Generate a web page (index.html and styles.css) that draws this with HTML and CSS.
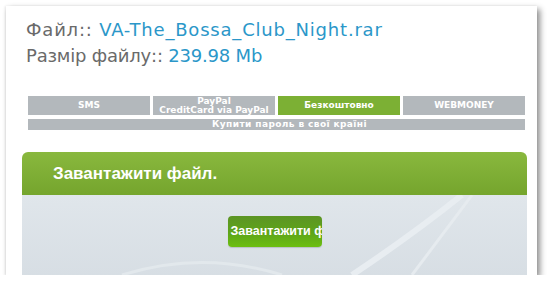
FILE: index.html
```html
<!DOCTYPE html>
<html>
<head>
<meta charset="utf-8">
<link rel="stylesheet" href="styles.css">
</head>
<body>
<div class="frame">
  <div class="info">
    <div class="line one">Файл:: <span class="val">VA-The_Bossa_Club_Night.rar</span></div>
    <div class="line two">Размір файлу:: <span class="val">239.98 Mb</span></div>
  </div>
  <div class="tabs">
    <div class="tab">SMS</div>
    <div class="tab">PayPal<br>CreditCard via PayPal</div>
    <div class="tab active">Безкоштовно</div>
    <div class="tab">WEBMONEY</div>
    <div class="tab wide">Купити пароль в свої країні</div>
  </div>
  <div class="panel">
    <div class="panel-head">Завантажити файл.</div>
    <div class="panel-body">
      <svg class="arcs" width="505" height="80" viewBox="0 0 505 80">
        <path d="M330 80 Q390 40 440 0" stroke="#e8edf1" stroke-width="6" fill="none"/>
        <path d="M390 80 Q420 40 450 0" stroke="#e6ebef" stroke-width="3" fill="none"/>
        <path d="M100 80 Q180 55 260 80" stroke="#e2e8ec" stroke-width="3" fill="none"/>
      </svg>
      <div class="btn">Завантажити файл</div>
    </div>
  </div>
</div>
</body>
</html>
```
FILE: styles.css
```css
html, body { margin: 0; padding: 0; background: #fff; }
.frame {
  margin: 6px 0 0 6px;
  width: 531px;
  height: 269px;
  background: #fff;
  box-shadow: 3px 3px 6px rgba(0,0,0,0.45), -1px 0 2px rgba(0,0,0,0.08);
  overflow: hidden;
  position: relative;
}
.info { padding: 11px 0 0 20px; font-family: "DejaVu Sans", Verdana, sans-serif; font-size: 18px; color: #6a6a6a; }
.line { height: 26px; line-height: 26px; }
.line.one { letter-spacing: 0.8px; }
.line.two { letter-spacing: -0.2px; }
.val { color: #2b97c9; }
.tabs {
  margin: 27px 0 0 22px;
  width: 499px;
  display: grid;
  grid-template-columns: repeat(4, 122px);
  column-gap: 3px;
  row-gap: 4px;
  font-family: "DejaVu Sans", Verdana, sans-serif;
  font-weight: bold;
  font-size: 9px;
  color: #fff;
}
.tab {
  background: #b3b8bc;
  height: 19px;
  display: flex; align-items: center; justify-content: center;
  text-align: center; line-height: 9px;
}
.tab.active { background: #7cb034; }
.tab.wide { grid-column: 1 / 5; height: 11px; padding-left: 26px; letter-spacing: 0.4px; }
.panel { margin: 22px 0 0 16px; width: 505px; }
.panel-head {
  height: 43px;
  border-radius: 6px 6px 0 0;
  background: linear-gradient(#89b83e, #75a52d);
  color: #fff;
  font-family: "Liberation Sans", Arial, sans-serif;
  font-weight: bold;
  font-size: 17px;
  line-height: 43px;
  padding-left: 31px;
}
.panel-body {
  height: 90px;
  background: linear-gradient(#e0e6eb, #d6dde3);
  position: relative;
  display: flex; justify-content: center;
}
.arcs { position: absolute; left: 0; top: 0; }
.btn {
  position: relative;
  margin-top: 21px;
  width: 94px; height: 31px;
  border-radius: 4px;
  background: linear-gradient(#5c9424, #5ea51a 55%, #6cbf10);
  box-shadow: 0 1px 1px rgba(0,0,0,0.15);
  color: #fff;
  font-family: "Liberation Sans", Arial, sans-serif;
  font-weight: bold;
  font-size: 12.5px;
  line-height: 31px;
  white-space: nowrap;
  overflow: hidden;
  padding-left: 3px;
  box-sizing: border-box;
}
```
